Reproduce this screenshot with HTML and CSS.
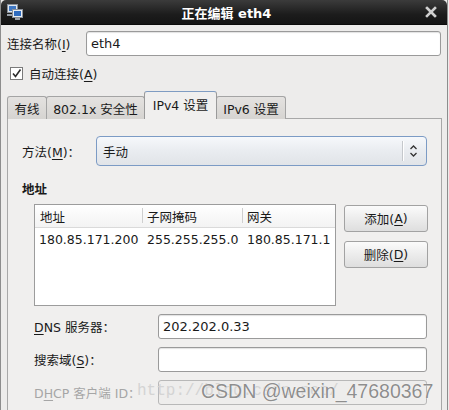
FILE: index.html
```html
<!DOCTYPE html>
<html lang="zh-CN">
<head>
<meta charset="utf-8">
<title>正在编辑 eth4</title>
<link rel="stylesheet" href="styles.css">
</head>
<body>
<div class="window">
  <div class="titlebar">
    <svg class="appicon" width="18" height="18" viewBox="0 0 18 18">
      <rect x="1.5" y="1.5" width="10" height="8" fill="#dfe6ee" stroke="#8a9099"/>
      <rect x="3" y="3" width="7" height="5" fill="#3f78c4"/>
      <rect x="6.5" y="6.5" width="10" height="8" fill="#e8edf2" stroke="#8a9099"/>
      <rect x="8" y="8" width="7" height="5" fill="#2f6cc0"/>
      <rect x="9" y="15" width="5" height="2" fill="#9aa0a8"/>
      <rect x="1" y="11" width="5" height="2" fill="#9aa0a8"/>
    </svg>
    <div class="title">正在编辑 eth4</div>
    <svg class="close" width="12" height="12" viewBox="0 0 12 12">
      <path d="M2 2 L10 10 M10 2 L2 10" stroke="#cfcfcf" stroke-width="2.6" stroke-linecap="square"/>
    </svg>
  </div>
  <div class="content">
    <div class="name-row">
      <span class="name-label">连接名称(<u>I</u>)</span>
      <div class="entry">eth4</div>
    </div>
    <div class="check-row">
      <span class="checkbox">
        <svg width="11" height="11" viewBox="0 0 11 11"><path d="M2 5.5 L4.5 8.5 L9.5 1.5" fill="none" stroke="#2b2b2b" stroke-width="1.6"/></svg>
      </span>
      <span>自动连接(<u>A</u>)</span>
    </div>
    <div class="notebook">
      <div class="tabs">
        <div class="tab t1">有线</div>
        <div class="tab t2">802.1x 安全性</div>
        <div class="tab t3 active">IPv4 设置</div>
        <div class="tab t4">IPv6 设置</div>
      </div>
      <div class="panel">
        <div class="method-row">
          <span class="method-label">方法(<u>M</u>)<span class="colon">：</span></span>
          <div class="combo">
            <span class="combo-text">手动</span>
            <span class="combo-sep"></span>
            <svg class="combo-arrows" width="9" height="14" viewBox="0 0 9 14">
              <path d="M1.5 5 L4.5 2 L7.5 5 M1.5 9 L4.5 12 L7.5 9" fill="none" stroke="#333" stroke-width="1.3"/>
            </svg>
          </div>
        </div>
        <div class="section-title">地址</div>
        <div class="addr-block">
          <div class="addr-table">
            <div class="thead">
              <div class="th c1">地址</div>
              <div class="th c2">子网掩码</div>
              <div class="th c3">网关</div>
            </div>
            <div class="trow">
              <div class="td c1">180.85.171.200</div>
              <div class="td c2">255.255.255.0</div>
              <div class="td c3">180.85.171.1</div>
            </div>
          </div>
          <div class="addr-buttons">
            <div class="btn">添加(<u>A</u>)</div>
            <div class="btn">删除(<u>D</u>)</div>
          </div>
        </div>
        <div class="form-grid">
          <span class="flabel"><u>D</u>NS 服务器<span class="colon">：</span></span>
          <div class="entry small">202.202.0.33</div>
          <span class="flabel">搜索域(<u>S</u>)<span class="colon">：</span></span>
          <div class="entry small"></div>
          <span class="flabel disabled">D<u>H</u>CP 客户端 ID<span class="colon">：</span></span>
          <div class="entry small dis"></div>
        </div>
      </div>
    </div>
  </div>
  <div class="wm-faint">http://blog.csdn.net/</div>
  <div class="watermark">CSDN @weixin_47680367</div>
</div>
</body>
</html>
```
FILE: styles.css
```css
* { box-sizing: border-box; }
html, body { margin: 0; padding: 0; background: #edeceb; }
body {
  font-family: "DejaVu Sans", "Noto Sans CJK SC", sans-serif;
  font-size: 12.5px;
  color: #1a1a1a;
  overflow: hidden;
}
u { text-decoration: underline; text-underline-offset: 2px; }
.colon { font-family: "Noto Sans CJK TC", sans-serif; }

.window {
  position: relative;
  width: 448px;
  height: 410px;
  background: #edeceb;
  border-left: 1px solid #8d8d8d;
  border-right: 1px solid #8d8d8d;
  overflow: hidden;
}

.titlebar {
  height: 25px;
  display: flex;
  align-items: center;
  background: linear-gradient(#3b3b3b, #1c1c1c 60%, #141414);
  border-radius: 5px 5px 0 0;
  border-bottom: 1px solid #0b0b0b;
  padding: 0 10px 0 5px;
}
.appicon { flex: none; }
.title {
  flex: 1;
  text-align: center;
  color: #ffffff;
  font-weight: bold;
  font-size: 13px;
  padding-left: 4px;
}
.close { flex: none; }

.content { padding: 6px 6px 0 6px; }

.name-row {
  display: flex;
  align-items: center;
  height: 25px;
}
.name-label { width: 79px; flex: none; }
.entry {
  flex: 1;
  height: 25px;
  background: #fff;
  border: 1px solid #9a9a9a;
  border-radius: 3px;
  box-shadow: inset 0 1px 1px rgba(0,0,0,0.12);
  padding: 0 4px;
  line-height: 23px;
  font-size: 13px;
}

.check-row {
  display: flex;
  align-items: center;
  height: 18px;
  margin-top: 8px;
  padding-left: 3px;
}
.checkbox {
  width: 13px;
  height: 13px;
  border: 1px solid #7a7a7a;
  background: #fff;
  display: flex;
  align-items: center;
  justify-content: center;
  margin-right: 6px;
}

.notebook { margin-top: 9px; }
.tabs {
  display: flex;
  align-items: flex-end;
  height: 28px;
  margin-bottom: -1px;
  position: relative;
  z-index: 1;
}
.tab {
  height: 23px;
  border: 1px solid #a4a4a4;
  border-bottom: none;
  border-radius: 3px 3px 0 0;
  background: linear-gradient(#e4e2e0, #d6d4d1);
  margin-right: -1px;
  display: flex;
  align-items: center;
  justify-content: center;
}
.t1 { width: 40px; }
.t2 { width: 99px; }
.t3 { width: 73px; }
.t4 { width: 70px; }
.tab.active {
  height: 28px;
  background: #f0efee;
  border-color: #9a9a9a;
  border-top: 1px solid #7f9cc2;
  position: relative;
  z-index: 2;
  padding-bottom: 2px;
}

.panel {
  width: 435px;
  height: 300px;
  background: #f0efee;
  border: 1px solid #a8a8a8;
  padding: 17px 14px 0 14px;
}

.method-row {
  display: flex;
  align-items: center;
}
.method-label { width: 74px; flex: none; }
.combo {
  flex: 1;
  height: 30px;
  border: 1px solid #7c9bc5;
  border-radius: 4px;
  background: linear-gradient(#f6f8fb, #e9ecf0 50%, #e1e4e8);
  display: flex;
  align-items: center;
  padding-left: 6px;
}
.combo-text { flex: 1; }
.combo-sep {
  width: 2px;
  height: 20px;
  border-left: 1px solid #c5c8cc;
  border-right: 1px solid #ffffff;
  margin-right: 5px;
}
.combo-arrows { margin-right: 8px; }

.section-title {
  margin-top: 16px;
  height: 16px;
  line-height: 16px;
  font-weight: bold;
}

.addr-block {
  display: flex;
  margin-top: 6px;
  padding-left: 12px;
}
.addr-table {
  width: 302px;
  height: 102px;
  background: #fff;
  border: 1px solid #9c9c9c;
}
.thead {
  display: flex;
  height: 23px;
  background: linear-gradient(#ffffff, #f3f3f3);
  border-bottom: 1px solid #dadada;
  align-items: center;
}
.th { position: relative; padding-left: 5px; }
.th.c2::before, .th.c3::before {
  content: "";
  position: absolute;
  left: 0;
  top: 1px;
  width: 1px;
  height: 15px;
  background: #cfcfcf;
}
.c1 { width: 107px; }
.c2 { width: 100px; }
.c3 { width: 93px; }
.trow {
  display: flex;
  height: 22px;
  align-items: center;
}
.td { padding-left: 4px; white-space: nowrap; }
.td.c2, .td.c3 { padding-left: 5px; }

.addr-buttons {
  margin-left: 8px;
  margin-top: 1px;
  display: flex;
  flex-direction: column;
  gap: 9px;
}
.btn {
  width: 84px;
  height: 27px;
  border: 1px solid #a2a2a2;
  border-radius: 3px;
  background: linear-gradient(#fbfbfb, #ececec 50%, #dedede);
  display: flex;
  align-items: center;
  justify-content: center;
}

.form-grid {
  display: grid;
  grid-template-columns: 124px 1fr;
  row-gap: 8px;
  align-items: center;
  margin-top: 8px;
  padding-left: 12px;
}
.entry.small { height: 25px; }
.flabel.disabled { color: #a6a6a6; }
.entry.dis {
  background: #eeedec;
  border-color: #b8b8b8;
  box-shadow: none;
}

.wm-faint {
  position: absolute;
  left: 136px;
  top: 382px;
  font-family: "Liberation Mono", monospace;
  font-size: 16px;
  color: #d4d4d4;
  white-space: nowrap;
}
.watermark {
  position: absolute;
  left: 200px;
  top: 380px;
  font-family: "Liberation Sans", sans-serif;
  font-size: 19.5px;
  color: #8e8e8e;
  white-space: nowrap;
  text-shadow: 0 0 1px #fff, 0 0 1px #fff;
}
```
